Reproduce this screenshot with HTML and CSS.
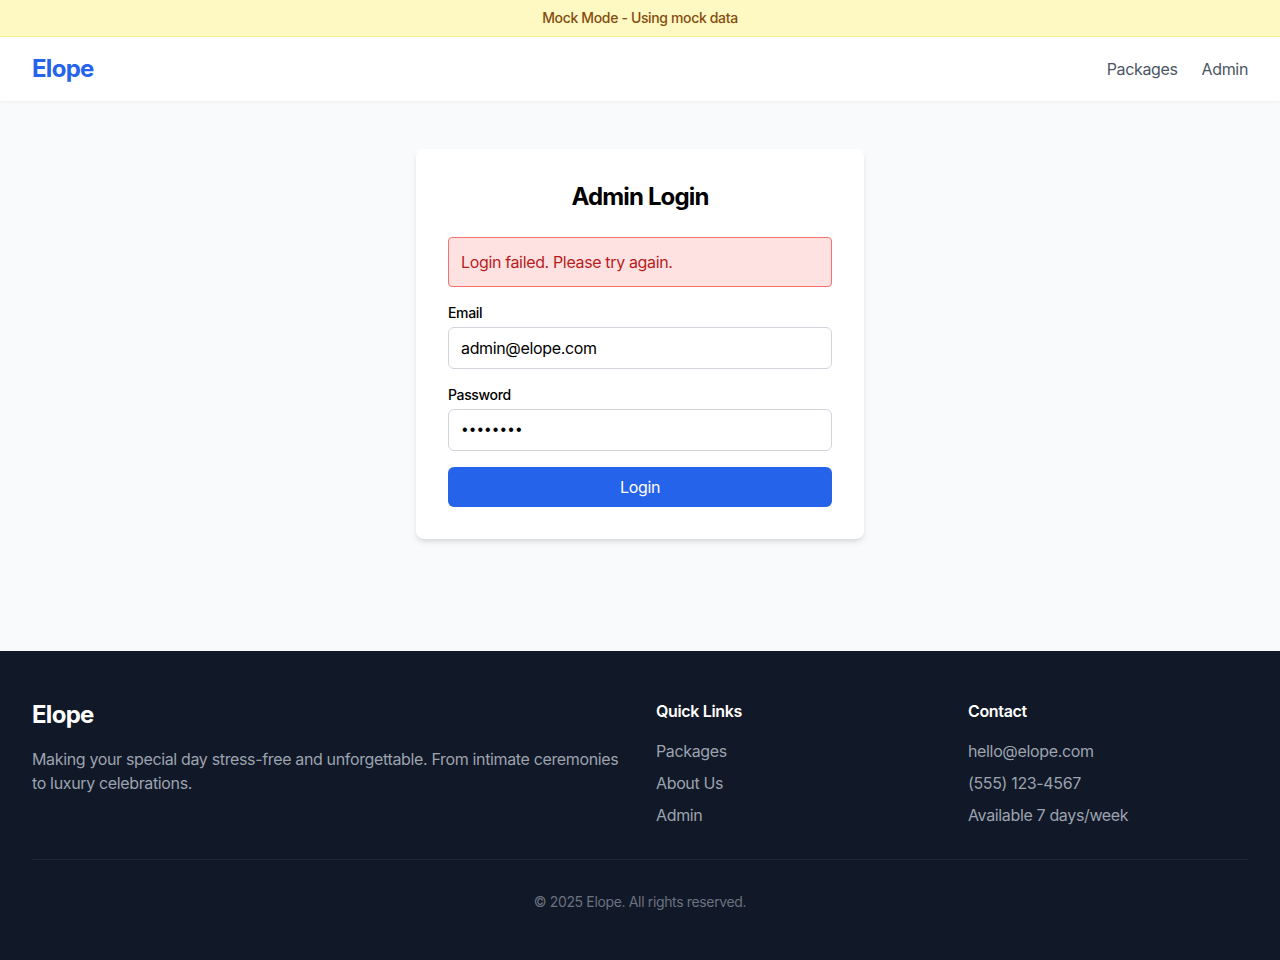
FILE: index.html
```html
<!DOCTYPE html>
<html lang="en">
<head>
<meta charset="utf-8">
<title>Elope - Admin Login</title>
<link rel="stylesheet" href="styles.css">
</head>
<body>
<div class="page">
  <div class="mock-banner">Mock Mode - Using mock data</div>
  <header class="site-header">
    <a class="logo" href="#">Elope</a>
    <nav class="nav">
      <a href="#">Packages</a>
      <a href="#">Admin</a>
    </nav>
  </header>
  <main class="main">
    <div class="card">
      <h1 class="card-title">Admin Login</h1>
      <div class="alert">Login failed. Please try again.</div>
      <form class="form">
        <div class="field">
          <label class="label" for="email">Email</label>
          <input class="input" id="email" type="email" value="admin@elope.com">
        </div>
        <div class="field">
          <label class="label" for="password">Password</label>
          <input class="input input-password" id="password" type="password" value="password">
        </div>
        <button class="btn" type="button">Login</button>
      </form>
    </div>
  </main>
  <footer class="footer">
    <div class="footer-grid">
      <div class="footer-brand">
        <h2 class="footer-logo">Elope</h2>
        <p class="footer-desc">Making your special day stress-free and unforgettable. From intimate ceremonies to luxury celebrations.</p>
      </div>
      <div class="footer-col">
        <h3 class="footer-heading">Quick Links</h3>
        <ul class="footer-list">
          <li><a href="#">Packages</a></li>
          <li><a href="#">About Us</a></li>
          <li><a href="#">Admin</a></li>
        </ul>
      </div>
      <div class="footer-col">
        <h3 class="footer-heading">Contact</h3>
        <ul class="footer-list">
          <li>hello@elope.com</li>
          <li>(555) 123-4567</li>
          <li>Available 7 days/week</li>
        </ul>
      </div>
    </div>
    <div class="footer-bottom">© 2025 Elope. All rights reserved.</div>
  </footer>
</div>
</body>
</html>
```

FILE: styles.css
```css
* { box-sizing: border-box; }
html, body { margin: 0; padding: 0; }
body {
  font-family: Inter, "Noto Sans", "Liberation Sans", sans-serif;
  font-size: 16px;
  line-height: 24px;
  letter-spacing: -0.022em;
  color: #111827;
  background: #f9fafb;
}
a { text-decoration: none; color: inherit; }
h1, h2, h3, p, ul { margin: 0; padding: 0; }
ul { list-style: none; }

.page {
  min-height: 100vh;
  display: flex;
  flex-direction: column;
}

.mock-banner {
  background: #fef9c3;
  border-bottom: 1px solid #fef08a;
  color: #854d0e;
  font-size: 14px;
  line-height: 20px;
  font-weight: 500;
  text-align: center;
  padding: 8px 16px;
}

.site-header {
  height: 64px;
  background: #ffffff;
  box-shadow: 0 1px 2px 0 rgba(0,0,0,0.05);
  display: flex;
  align-items: center;
  justify-content: space-between;
  padding: 0 32px;
  position: relative;
  z-index: 1;
}
.logo {
  font-size: 24px;
  line-height: 32px;
  font-weight: 700;
  letter-spacing: -0.03em;
  color: #2563eb;
}
.nav {
  display: flex;
  gap: 24px;
}
.nav a {
  color: #4b5563;
  font-size: 16px;
  line-height: 24px;
}

.main {
  flex-grow: 1;
  padding: 48px 16px;
  display: flex;
  justify-content: center;
  align-items: flex-start;
}
.card {
  width: 448px;
  background: #ffffff;
  border-radius: 8px;
  box-shadow: 0 4px 6px -1px rgba(0,0,0,0.1), 0 2px 4px -2px rgba(0,0,0,0.1);
  padding: 32px;
}
.card-title {
  font-size: 24px;
  line-height: 32px;
  font-weight: 700;
  letter-spacing: -0.035em;
  text-align: center;
  color: #000000;
  margin-bottom: 24px;
}
.alert {
  background: #fee2e2;
  border: 1px solid #f87171;
  color: #b91c1c;
  border-radius: 4px;
  padding: 12px;
  margin-bottom: 16px;
}
.form {
  display: flex;
  flex-direction: column;
  gap: 16px;
}
.field {
  display: flex;
  flex-direction: column;
}
.label {
  font-size: 14px;
  line-height: 20px;
  font-weight: 500;
  color: #000000;
  margin-bottom: 4px;
}
.input {
  font-family: inherit;
  font-size: 16px;
  line-height: 24px;
  letter-spacing: inherit;
  color: #000000;
  padding: 8px 12px;
  border: 1px solid #d1d5db;
  border-radius: 6px;
  background: #ffffff;
  width: 100%;
  height: 42px;
  outline: none;
}
.input-password {
  font-family: "Liberation Sans", sans-serif;
  letter-spacing: 2.1px;
  padding-left: 13px;
}
.btn {
  font-family: inherit;
  font-size: 16px;
  line-height: 24px;
  letter-spacing: inherit;
  color: #ffffff;
  background: #2563eb;
  border: none;
  border-radius: 6px;
  padding: 8px 16px;
  width: 100%;
  cursor: pointer;
}

.footer {
  background: #111827;
  color: #ffffff;
  padding: 48px 32px;
}
.footer-grid {
  display: grid;
  grid-template-columns: repeat(4, 1fr);
  gap: 32px;
}
.footer-brand {
  grid-column: span 2;
}
.footer-logo {
  font-size: 24px;
  line-height: 32px;
  font-weight: 700;
  letter-spacing: -0.03em;
  margin-bottom: 16px;
}
.footer-desc {
  color: #9ca3af;
}
.footer-heading {
  font-size: 16px;
  line-height: 24px;
  font-weight: 600;
  margin-bottom: 16px;
}
.footer-list {
  display: flex;
  flex-direction: column;
  gap: 8px;
  color: #9ca3af;
}
.footer-bottom {
  margin-top: 32px;
  border-top: 1px solid #1f2937;
  padding-top: 32px;
  text-align: center;
  font-size: 14px;
  line-height: 20px;
  color: #6b7280;
}
```
